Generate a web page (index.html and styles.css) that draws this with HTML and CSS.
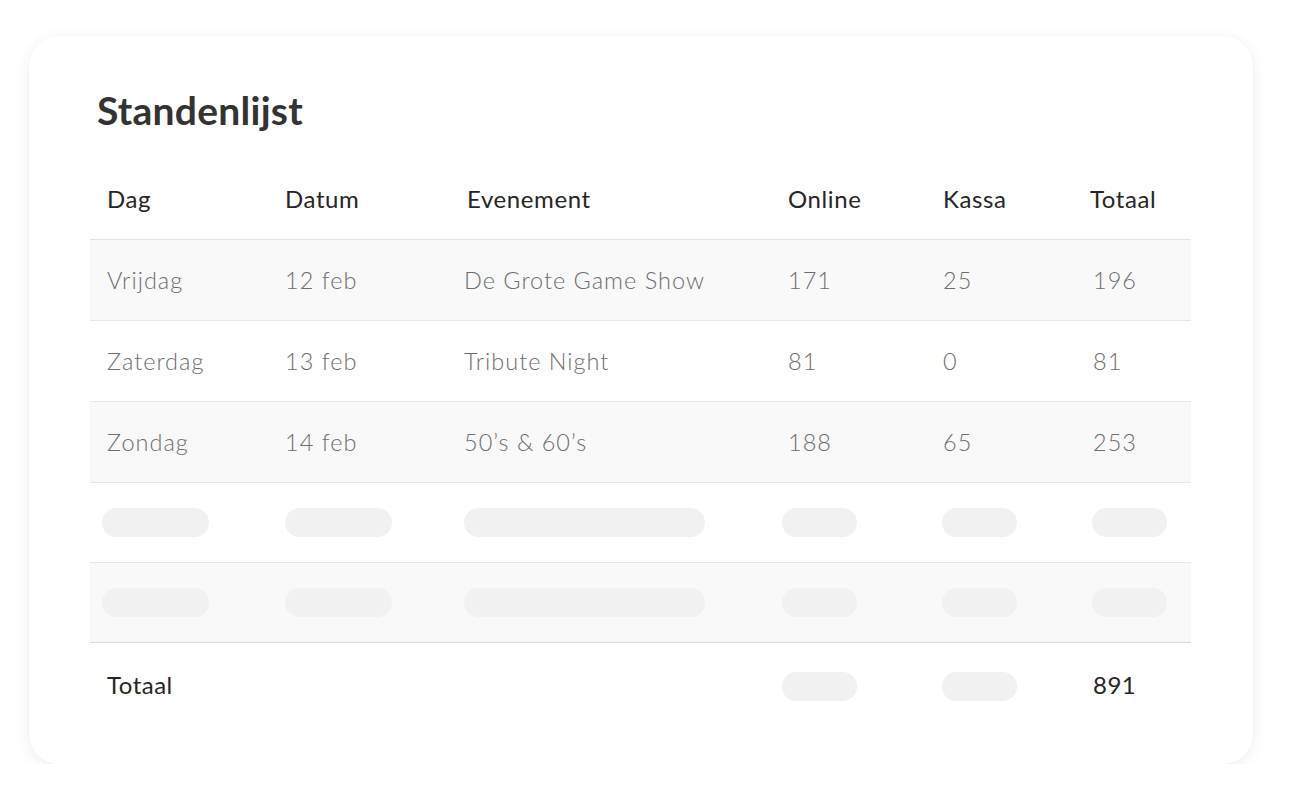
FILE: index.html
```html
<!DOCTYPE html>
<html lang="nl">
<head>
<meta charset="utf-8">
<title>Standenlijst</title>
<link rel="stylesheet" href="styles.css">
</head>
<body>
<main class="card">
  <h1 class="title">Standenlijst</h1>
  <div class="table">
    <div class="row head">
      <div class="cell">Dag</div>
      <div class="cell">Datum</div>
      <div class="cell h-ev">Evenement</div>
      <div class="cell">Online</div>
      <div class="cell">Kassa</div>
      <div class="cell h-tot">Totaal</div>
    </div>
    <div class="row body striped">
      <div class="cell">Vrijdag</div>
      <div class="cell">12 feb</div>
      <div class="cell">De Grote Game Show</div>
      <div class="cell">171</div>
      <div class="cell">25</div>
      <div class="cell">196</div>
    </div>
    <div class="row body">
      <div class="cell">Zaterdag</div>
      <div class="cell">13 feb</div>
      <div class="cell">Tribute Night</div>
      <div class="cell">81</div>
      <div class="cell">0</div>
      <div class="cell">81</div>
    </div>
    <div class="row body striped">
      <div class="cell">Zondag</div>
      <div class="cell">14 feb</div>
      <div class="cell">50’s &amp; 60’s</div>
      <div class="cell">188</div>
      <div class="cell">65</div>
      <div class="cell">253</div>
    </div>
    <div class="row body short">
      <div class="cell"><span class="sk sk-dag"></span></div>
      <div class="cell"><span class="sk sk-dat"></span></div>
      <div class="cell"><span class="sk sk-ev"></span></div>
      <div class="cell"><span class="sk sk-num sk-on"></span></div>
      <div class="cell"><span class="sk sk-num"></span></div>
      <div class="cell"><span class="sk sk-num"></span></div>
    </div>
    <div class="row body striped short last">
      <div class="cell"><span class="sk sk-dag"></span></div>
      <div class="cell"><span class="sk sk-dat"></span></div>
      <div class="cell"><span class="sk sk-ev"></span></div>
      <div class="cell"><span class="sk sk-num sk-on"></span></div>
      <div class="cell"><span class="sk sk-num"></span></div>
      <div class="cell"><span class="sk sk-num"></span></div>
    </div>
    <div class="row foot">
      <div class="cell">Totaal</div>
      <div class="cell"></div>
      <div class="cell"></div>
      <div class="cell"><span class="sk sk-num sk-on"></span></div>
      <div class="cell"><span class="sk sk-num"></span></div>
      <div class="cell">891</div>
    </div>
  </div>
</main>
</body>
</html>
```

FILE: styles.css
```css
* { box-sizing: border-box; }

html, body {
  margin: 0;
  padding: 0;
  background: #ffffff;
}

body {
  font-family: "Lato", "Noto Sans", Arial, sans-serif;
  color: #222222;
  padding: 36px 0 0 29px;
}

.card {
  width: 1224px;
  height: 728px;
  background: #ffffff;
  border-radius: 30px;
  box-shadow: 0 3px 16px rgba(0, 0, 0, 0.07), 0 0 2px rgba(0, 0, 0, 0.03);
  padding: 44px 62px 0 61px;
}

.title {
  margin: 0 0 20px 7px;
  font-size: 39px;
  line-height: 60px;
  font-weight: 700;
  color: #333333;
  letter-spacing: 0.25px;
}

.table {
  width: 1101px;
}

.row {
  display: grid;
  grid-template-columns: 178px 179px 324px 155px 150px 1fr;
  padding-left: 17px;
  align-items: center;
}

.head {
  height: 80px;
  padding-bottom: 3px;
  border-bottom: 1px solid #e3e3ea;
  font-size: 24px;
  letter-spacing: 0.6px;
  color: #262626;
}

.h-ev { margin-left: 3px; }
.h-tot { margin-left: -3px; }

.body {
  height: 81px;
  border-bottom: 1px solid #e6e6ec;
  font-size: 23.5px;
  letter-spacing: 1px;
  font-weight: 300;
  color: #6e6e6e;
}

.short {
  height: 80px;
}

.striped {
  background: #f9f9f9;
}

.last {
  border-bottom-color: #d4d8e0;
}

.foot {
  height: 86px;
  padding-bottom: 4px;
  font-size: 24px;
  letter-spacing: 0.5px;
  color: #262626;
}

.cell {
  white-space: nowrap;
}

.sk {
  display: block;
  height: 29px;
  border-radius: 15px;
  background: #f1f1f1;
}

.foot .sk {
  margin-top: 4px;
}

.sk-dag { width: 107px; margin-left: -5px; }
.sk-dat { width: 107px; }
.sk-ev { width: 241px; }
.sk-num { width: 75px; margin-left: -1px; }
.sk-on { margin-left: -6px; }
```
